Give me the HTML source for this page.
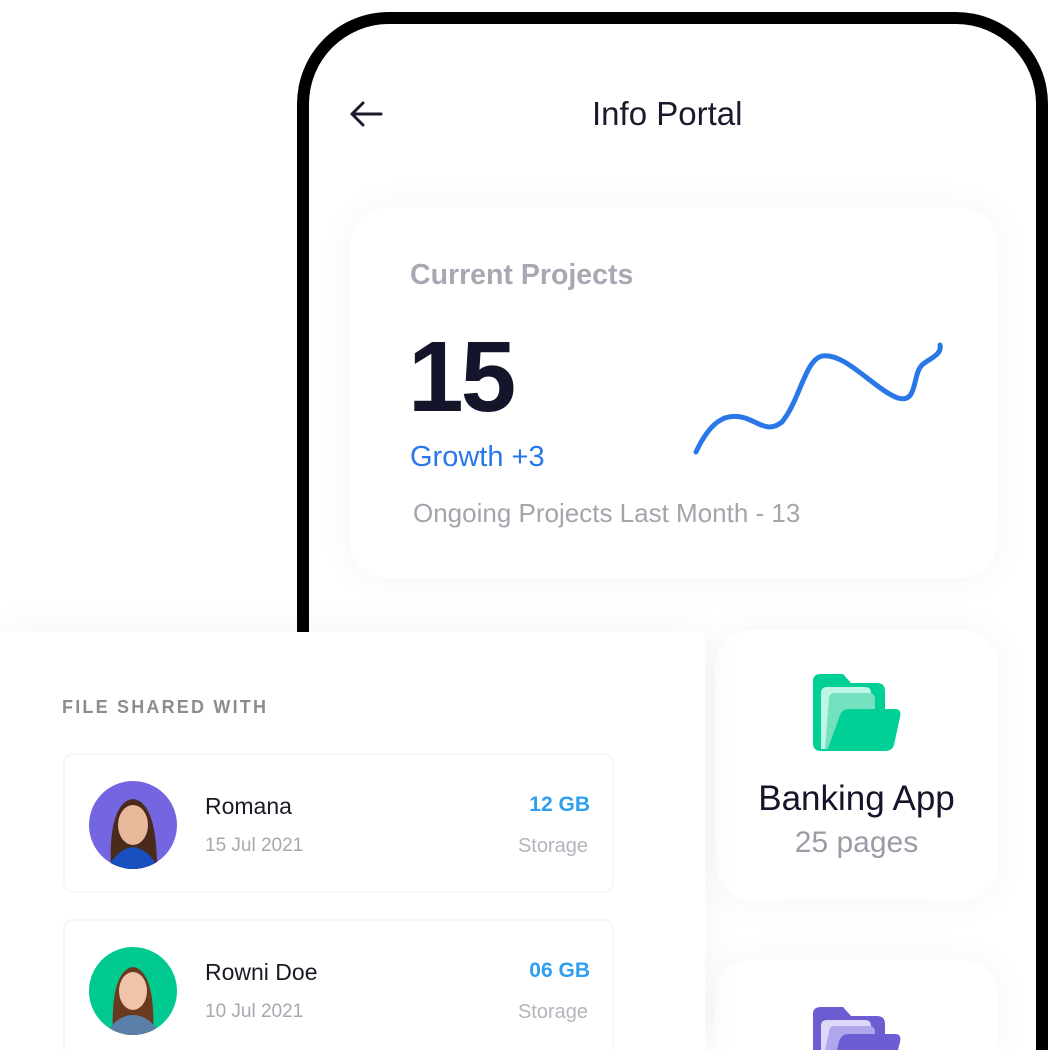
<!DOCTYPE html>
<html><head><meta charset="utf-8"><style>
*{margin:0;padding:0;box-sizing:border-box}
html,body{width:1052px;height:1050px;overflow:hidden;background:#fff}
body{font-family:"Liberation Sans",sans-serif;position:relative}
#wrap{position:absolute;left:0;top:0;width:1052px;height:1050px;overflow:hidden}
.phone{position:absolute;left:297px;top:12px;width:751px;height:1038px;border:12px solid #000;border-bottom:none;border-radius:92px 92px 0 0;background:#fff}
.abs{position:absolute}
.card{position:absolute;background:#fff;border-radius:36px;box-shadow:0 0 40px rgba(30,30,60,0.045)}
.panel{position:absolute;left:0;top:632px;width:705px;height:418px;background:#fff;box-shadow:0 0 40px rgba(30,30,60,0.05)}
.row{position:absolute;left:63px;width:551px;height:140px;border:2px solid #f6f6fb;border-radius:10px;background:#fff}
.av{position:absolute;left:24px;top:26px;width:88px;height:88px;border-radius:50%;overflow:hidden}
.name{position:absolute;left:140px;top:38px;font-size:23px;color:#1a1a24}
.date{position:absolute;left:140px;top:80px;font-size:19px;color:#a8a8b0}
.gb{position:absolute;right:22px;top:38px;font-size:21px;font-weight:bold;color:#2f9ff0}
.st{position:absolute;right:24px;top:80px;font-size:20px;color:#b4b4bc}
</style></head><body><div id="wrap">
<div class="phone"></div>
<svg class="abs" style="left:348px;top:100px" width="36" height="28" viewBox="0 0 36 28"><path d="M33 14H4M15 3L4 14l11 11" fill="none" stroke="#1a1a2e" stroke-width="3" stroke-linecap="round" stroke-linejoin="round"/></svg>
<div class="abs" style="left:592px;top:95px;font-size:33px;color:#1a1a2e">Info Portal</div>
<div class="card" style="left:350px;top:208px;width:647px;height:370px"></div>
<div class="abs" style="left:410px;top:259px;font-size:28.5px;font-weight:bold;color:#a8a8b2">Current Projects</div>
<div class="abs" style="left:408px;top:322px;font-size:100px;font-weight:bold;color:#14142a;letter-spacing:-3px;line-height:110px">15</div>
<div class="abs" style="left:410px;top:441px;font-size:29px;color:#2a78e8">Growth +3</div>
<div class="abs" style="left:413px;top:498px;font-size:26px;color:#a4a4ac">Ongoing Projects Last Month - 13</div>
<svg class="abs" style="left:680px;top:330px" width="280" height="140"><path d="M16 122C30 92 45 82 65 88C80 93 88 103 102 92C120 70 125 30 142 26C165 22 195 60 218 68C238 74 232 45 242 35C250 28 262 25 260 15" fill="none" stroke="#2a78e8" stroke-width="5" stroke-linecap="round"/></svg>
<div class="card" style="left:715px;top:630px;width:283px;height:270px"></div>
<div class="card" style="left:715px;top:960px;width:283px;height:90px;border-radius:36px 36px 0 0"></div>
<svg class="abs" style="left:813px;top:673px" width="90" height="80" viewBox="0 0 90 80"><path d="M0 8Q0 1 8 1H30L38 10H64Q72 10 72 18V70Q72 78 64 78H8Q0 78 0 70Z" fill="#00cf96"/><path d="M8 20Q8 14 14 14H52Q58 14 58 20V76H8Z" fill="#bff5e4"/><path d="M16 26Q16 20 22 20H56Q62 20 62 26V76H12Z" fill="#73e0c0"/><path d="M26 45Q28 36 36 36H82Q89 36 87 44L81 72Q79 78 72 78H14Z" fill="#00cf96"/></svg>
<div class="abs" style="left:715px;top:779px;width:283px;text-align:center;font-size:35px;color:#14142a">Banking App</div>
<div class="abs" style="left:715px;top:826px;width:283px;text-align:center;font-size:30px;color:#9c9ca8">25 pages</div>
<svg class="abs" style="left:813px;top:1006px" width="90" height="44" viewBox="0 0 90 44"><path d="M0 8Q0 1 8 1H30L38 10H64Q72 10 72 18V44H0Z" fill="#6c5dd3"/><path d="M8 20Q8 14 14 14H52Q58 14 58 20V44H8Z" fill="#ddd8f7"/><path d="M16 26Q16 20 22 20H56Q62 20 62 26V44H12Z" fill="#b0a6ee"/><path d="M26 36Q28 28 36 28H82Q89 28 87 36L85 44H24Z" fill="#6c5dd3"/></svg>
<div class="panel"></div>
<div class="abs" style="left:62px;top:697px;font-size:18px;font-weight:bold;letter-spacing:2.2px;color:#8c8c90">FILE SHARED WITH</div>
<div class="row" style="top:753px">
<div class="av" style="background:#7466e0"><svg width="88" height="88"><path d="M22 88C20 50 26 20 44 18C62 20 68 50 68 88Z" fill="#4a2a1a"/><ellipse cx="44" cy="44" rx="15" ry="20" fill="#e8b89a"/><path d="M18 88Q28 68 44 66Q60 68 70 88Z" fill="#1a4fbf"/></svg></div>
<div class="name">Romana</div><div class="date">15 Jul 2021</div>
<div class="gb">12 GB</div><div class="st">Storage</div></div>
<div class="row" style="top:919px;height:131px;border-bottom:none;border-radius:10px 10px 0 0">
<div class="av" style="background:#00c98f"><svg width="88" height="88"><path d="M24 88C22 50 28 22 44 20C60 22 66 50 64 88Z" fill="#6a3a20"/><ellipse cx="44" cy="44" rx="14" ry="19" fill="#f0c4a8"/><path d="M16 88Q28 68 44 68Q60 68 72 88Z" fill="#5a7fa8"/></svg></div>
<div class="name">Rowni Doe</div><div class="date">10 Jul 2021</div>
<div class="gb">06 GB</div><div class="st">Storage</div></div>
</div></body></html>
